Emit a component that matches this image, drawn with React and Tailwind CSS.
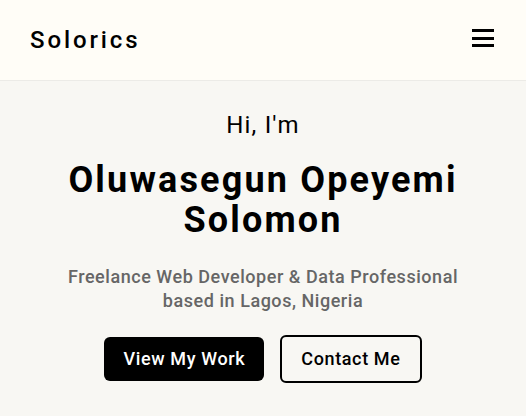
import React from 'react';

const App = () => {
  return (
    <div className="min-h-[416px] bg-[#f8f7f3] font-['Roboto',sans-serif] text-black">
      <header className="h-[81px] bg-[#fffdf7] border-b border-[#ecebe7] flex items-center justify-between pl-[30px] pr-[32px]">
        <span className="text-[24px] font-medium tracking-[0.12em] leading-8">Solorics</span>
        <button className="w-[22px] h-[18px] mb-[4px] flex flex-col justify-between" aria-label="Menu">
          <span className="block h-[3px] w-full bg-black" />
          <span className="block h-[3px] w-full bg-black" />
          <span className="block h-[3px] w-full bg-black" />
        </button>
      </header>

      <main className="flex flex-col items-center text-center pt-[28px] px-6">
        <p className="text-2xl leading-8 tracking-[0.05em]">Hi, I'm</p>
        <h1 className="mt-[19px] text-4xl leading-10 font-bold tracking-[0.06em]">
          Oluwasegun Opeyemi
          <br />
          Solomon
        </h1>
        <p className="mt-[25px] text-lg leading-6 font-medium text-[#666666] tracking-[0.03em] max-w-[410px]">
          Freelance Web Developer &amp; Data Professional based in Lagos, Nigeria
        </p>
        <div className="mt-[22px] flex items-center gap-4">
          <a className="bg-black text-white rounded-md px-[19px] py-2.5 text-lg leading-6 font-medium tracking-[0.035em]">View My Work</a>
          <a className="border-2 border-black text-black rounded-md px-[19px] py-2.5 text-lg leading-6 font-medium tracking-[0.035em]">Contact Me</a>
        </div>
      </main>
    </div>
  );
};

export default App;
